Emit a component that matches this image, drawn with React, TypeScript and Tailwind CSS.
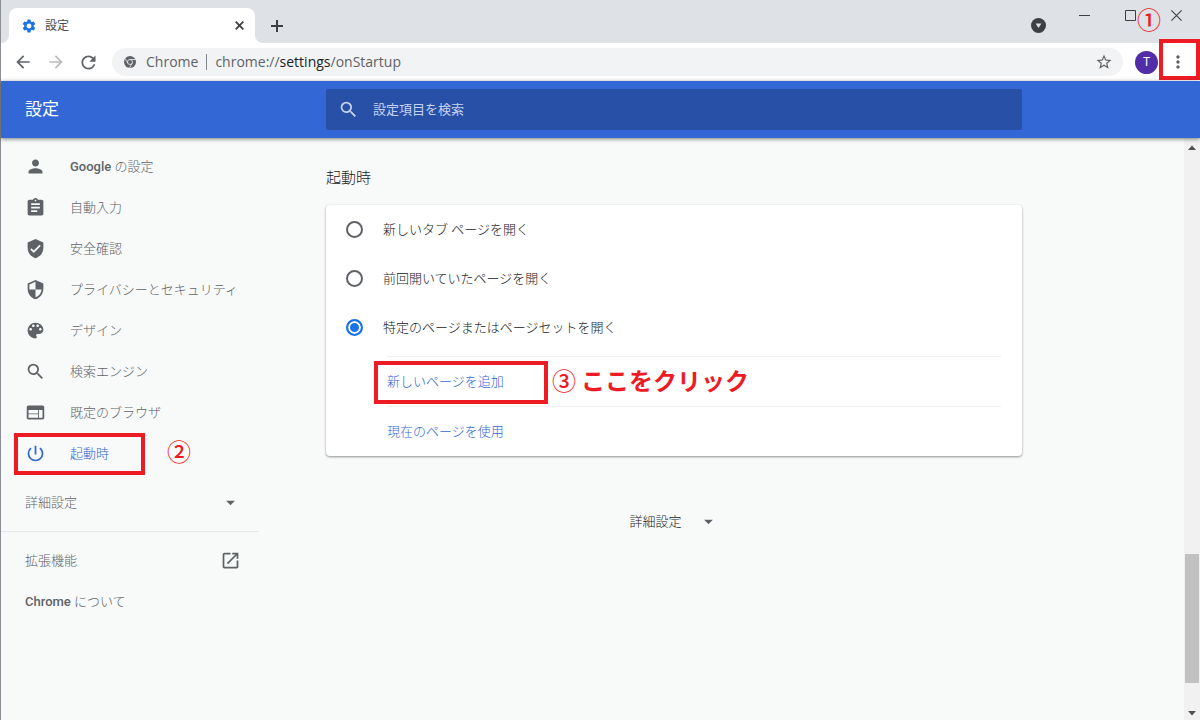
import { useState } from 'react';
import type { ReactNode } from 'react';
import {
  MdArrowBack,
  MdArrowDropDown,
  MdArrowForward,
  MdAssignment,
  MdMoreVert,
  MdOpenInNew,
  MdPerson,
  MdPowerSettingsNew,
  MdRefresh,
  MdSearch,
  MdSecurity,
  MdSettings,
  MdStarBorder,
  MdVerifiedUser,
  MdWeb,
} from 'react-icons/md';

interface NavEntry {
  id: string;
  label: ReactNode;
  icon: (props: { className?: string }) => ReactNode;
}

function PaletteIcon({ className }: { className?: string }) {
  return (
    <svg className={className} viewBox="0 0 24 24" fill="currentColor">
      <path d="M12 3c-4.97 0-9 4.03-9 9s4.03 9 9 9c.83 0 1.5-.67 1.5-1.5 0-.39-.15-.74-.39-1.01-.23-.26-.38-.61-.38-.99 0-.83.67-1.5 1.5-1.5H16c2.76 0 5-2.24 5-5 0-4.42-4.03-8-9-8zm-5.5 9c-.83 0-1.5-.67-1.5-1.5S5.67 9 6.5 9 8 9.67 8 10.5 7.33 12 6.5 12zm3-4C8.67 8 8 7.33 8 6.5S8.67 5 9.5 5s1.5.67 1.5 1.5S10.33 8 9.5 8zm5 0c-.83 0-1.5-.67-1.5-1.5S13.67 5 14.5 5s1.5.67 1.5 1.5S15.33 8 14.5 8zm3 4c-.83 0-1.5-.67-1.5-1.5S16.67 9 17.5 9s1.5.67 1.5 1.5-.67 1.5-1.5 1.5z" />
    </svg>
  );
}

const NAV_ENTRIES: NavEntry[] = [
  {
    id: 'people',
    label: (
      <>
        <span className="font-medium">Google</span> の設定
      </>
    ),
    icon: MdPerson,
  },
  { id: 'autofill', label: '自動入力', icon: MdAssignment },
  { id: 'safetyCheck', label: '安全確認', icon: MdVerifiedUser },
  { id: 'privacy', label: 'プライバシーとセキュリティ', icon: MdSecurity },
  { id: 'appearance', label: 'デザイン', icon: PaletteIcon },
  { id: 'search', label: '検索エンジン', icon: MdSearch },
  { id: 'defaultBrowser', label: '既定のブラウザ', icon: MdWeb },
  { id: 'onStartup', label: '起動時', icon: MdPowerSettingsNew },
];

const STARTUP_OPTIONS = [
  { id: 'newTab', label: '新しいタブ ページを開く' },
  { id: 'continue', label: '前回開いていたページを開く' },
  { id: 'specific', label: '特定のページまたはページセットを開く' },
];

function TabStrip() {
  return (
    <div className="flex h-[43px] items-end bg-[#dee1e6] pr-px pl-2 text-[#3c4043]">
      <div className="relative flex h-[35px] w-[246px] items-center rounded-t-lg bg-white pr-2 pl-3">
        <svg className="absolute bottom-0 -left-2 size-2 fill-white" viewBox="0 0 8 8">
          <path d="M8 0v8H0a8 8 0 0 0 8-8z" />
        </svg>
        <svg className="absolute -right-2 bottom-0 size-2 fill-white" viewBox="0 0 8 8">
          <path d="M0 0v8h8a8 8 0 0 1-8-8z" />
        </svg>
        <MdSettings className="size-4 text-[#1a73e8]" />
        <span className="ml-2 flex-1 text-xs text-[#45494d]">設定</span>
        <button type="button" aria-label="タブを閉じる" className="flex size-4 items-center justify-center">
          <svg className="size-[9px] stroke-current" viewBox="0 0 9 9" strokeWidth="1.8">
            <path d="M.7.7l7.6 7.6M8.3.7L.7 8.3" />
          </svg>
        </button>
      </div>
      <button type="button" aria-label="新しいタブ" className="ml-2 flex h-[35px] w-7 items-center justify-center">
        <svg className="size-3 stroke-current" viewBox="0 0 12 12" strokeWidth="2">
          <path d="M6 0v12M0 6h12" />
        </svg>
      </button>
      <button type="button" aria-label="タブを検索" className="ml-auto flex h-[35px] w-[46px] items-center justify-center">
        <svg className="size-[15px]" viewBox="0 0 15 15">
          <circle cx="7.5" cy="7.5" r="7.5" fill="#3c4043" />
          <path d="M4.6 5.5h5.8L7.5 10z" fill="#dee1e6" />
        </svg>
      </button>
      <div className="flex self-start">
        <button type="button" aria-label="最小化" className="flex h-[31px] w-[46px] items-center justify-center">
          <svg className="size-[11px] stroke-current" viewBox="0 0 11 11">
            <path d="M0 5.5h11" />
          </svg>
        </button>
        <button type="button" aria-label="最大化" className="flex h-[31px] w-[46px] items-center justify-center">
          <svg className="size-[11px] fill-none stroke-current" viewBox="0 0 11 11">
            <path d="M.5.5h10v10H.5z" />
          </svg>
        </button>
        <button type="button" aria-label="閉じる" className="flex h-[31px] w-[46px] items-center justify-center">
          <svg className="size-[11px] stroke-current" viewBox="0 0 11 11" strokeWidth="1.1">
            <path d="M.4.4l10.2 10.2M10.6.4L.4 10.6" />
          </svg>
        </button>
      </div>
    </div>
  );
}

function Toolbar() {
  return (
    <div className="flex h-[38px] items-center bg-white pl-[5px] text-[#5f6368]">
      <button type="button" aria-label="戻る" className="flex w-[33px] justify-center">
        <MdArrowBack className="size-5" />
      </button>
      <button type="button" aria-label="進む" className="flex w-[33px] justify-center text-[#babcbe]">
        <MdArrowForward className="size-5" />
      </button>
      <button type="button" aria-label="再読み込み" className="flex w-[33px] justify-center">
        <MdRefresh className="size-[21px]" />
      </button>
      <div className="ml-[7px] flex h-7 flex-1 items-center rounded-full bg-[#f1f3f4] pr-[10px] pl-3 font-['Open_Sans','Noto_Sans_CJK_JP',sans-serif] text-sm">
        <svg className="size-3 shrink-0" viewBox="0 0 24 24">
          <circle cx="12" cy="12" r="12" fill="#5f6368" />
          <circle cx="12" cy="12" r="5" fill="none" stroke="#f1f3f4" strokeWidth="1.6" />
          <path d="M12 7h11M7.7 14.5L2.4 5.2M16.3 14.5L11 23.8" stroke="#f1f3f4" strokeWidth="1.6" />
        </svg>
        <span className="ml-[10px]">Chrome</span>
        <span className="mx-2 h-4 w-px bg-[#80868b]" />
        <span className="flex-1">
          chrome://<span className="text-[#202124]">settings</span>/onStartup
        </span>
        <button type="button" aria-label="ブックマーク">
          <MdStarBorder className="size-[18px]" />
        </button>
      </div>
      <button
        type="button"
        aria-label="プロフィール"
        className="ml-3 size-[23px] rounded-full bg-[#512da8] text-xs text-white"
      >
        T
      </button>
      <div className="relative ml-[2px] flex h-full w-10 items-center">
        <button type="button" aria-label="メニュー" className="flex w-9 justify-center">
          <MdMoreVert className="size-5" />
        </button>
        <span className="pointer-events-none absolute -top-1 right-0 bottom-px -left-px border-4 border-[#ed1c24]" />
        <StepNumber className="absolute -top-9 -left-[23px]">①</StepNumber>
      </div>
    </div>
  );
}

function StepNumber({ children, className = '' }: { children: string; className?: string }) {
  return (
    <span className={`pointer-events-none text-2xl leading-7 font-medium text-[#ed1c24] ${className}`}>
      {children}
    </span>
  );
}

function SettingsHeader() {
  return (
    <header className="relative z-10 grid h-[57px] grid-cols-[325px_minmax(0,696px)_1fr] items-center bg-[#3367d6] shadow-[0_1px_4px_rgba(0,0,0,0.5)]">
      <h1 className="pl-6 text-[17px] text-white">設定</h1>
      <label className="flex h-[41px] items-center rounded-xs bg-[#2850a7] pl-3 text-[#c6d3f0]">
        <MdSearch className="size-[21px]" />
        <input
          type="search"
          aria-label="設定項目を検索"
          placeholder="設定項目を検索"
          className="ml-[14px] flex-1 bg-transparent text-[13px] outline-none placeholder:text-[#c6d3f0]"
        />
      </label>
    </header>
  );
}

function Sidebar() {
  return (
    <nav className="w-[257px] pt-2 text-[13px] font-light text-[#5f6368]">
      <ul>
        {NAV_ENTRIES.map(({ id, label, icon: Icon }) => (
          <li key={id} className="relative">
            <a
              href={`#${id}`}
              className={`flex h-[41px] items-center pl-6 ${id === 'onStartup' ? 'text-[#3367d6]' : ''}`}
            >
              <Icon className="mr-6 size-[21px]" />
              <span>{label}</span>
            </a>
            {id === 'onStartup' && (
              <>
                <span className="pointer-events-none absolute top-0 left-[13px] h-[42px] w-[131px] border-4 border-[#ed1c24]" />
                <StepNumber className="absolute top-[6px] left-[166px]">②</StepNumber>
              </>
            )}
          </li>
        ))}
      </ul>
      <button type="button" className="my-2 flex h-[41px] w-full items-center justify-between pr-[17px] pl-6">
        詳細設定
        <MdArrowDropDown className="size-[21px]" />
      </button>
      <div className="border-t border-[#e4e6ea] pt-2">
        <a href="#extensions" className="flex h-[41px] items-center justify-between pr-[17px] pl-6">
          拡張機能
          <MdOpenInNew className="size-[21px]" />
        </a>
        <a href="#about" className="flex h-[41px] items-center pl-6">
          <span>
            <span className="font-medium">Chrome</span> について
          </span>
        </a>
      </div>
    </nav>
  );
}

function StartupSection() {
  const [selected, setSelected] = useState('specific');

  return (
    <main className="text-[13px] font-light text-[#202124]">
      <h2 className="pt-7 text-[15px] leading-6">起動時</h2>
      <div className="mt-[15px] rounded-sm bg-white pr-[21px] pl-5 shadow-[0_1px_2px_rgba(60,64,67,0.4),0_1px_3px_rgba(60,64,67,0.2)]">
        {STARTUP_OPTIONS.map(({ id, label }) => (
          <label key={id} className="flex h-[49px] items-center gap-5">
            <input
              type="radio"
              name="startup"
              checked={selected === id}
              onChange={() => setSelected(id)}
              className="size-[17px] appearance-none rounded-full border-2 border-[#5f6368] checked:border-[#1a73e8] checked:bg-[#1a73e8] checked:shadow-[inset_0_0_0_2px_white]"
            />
            {label}
          </label>
        ))}
        <div className="mt-1 ml-[41px] text-[#3367d6]">
          <div className="relative flex h-[50px] items-center border-t border-[#f0f0f0]">
            <button type="button">新しいページを追加</button>
            <span className="pointer-events-none absolute top-1 -left-[13px] h-[43px] w-[174px] border-4 border-[#ed1c24]" />
            <div className="pointer-events-none absolute left-[165px] flex items-center gap-[5px] text-[#ed1c24]">
              <StepNumber>③</StepNumber>
              <span className="text-2xl leading-7 font-bold whitespace-nowrap">ここをクリック</span>
            </div>
          </div>
          <div className="flex h-[50px] items-center border-t border-[#f0f0f0]">
            <button type="button">現在のページを使用</button>
          </div>
        </div>
      </div>
      <div className="mt-[45px] flex justify-center">
        <button type="button" className="flex h-[41px] items-center gap-4">
          詳細設定
          <MdArrowDropDown className="size-[21px] text-[#5f6368]" />
        </button>
      </div>
    </main>
  );
}

function ScrollBar() {
  return (
    <div className="flex w-4 flex-col items-center bg-[#f1f1f1] text-[#505050]">
      <svg className="mt-[7px] h-[5px] w-2 fill-current" viewBox="0 0 8 5">
        <path d="M0 5l4-4.5L8 5z" />
      </svg>
      <span className="mt-auto mb-7 h-[129px] w-[14px] bg-[#c1c1c1]" />
      <svg className="mb-1 h-[5px] w-2 fill-current" viewBox="0 0 8 5">
        <path d="M0 0l4 4.5L8 0z" />
      </svg>
    </div>
  );
}

export default function App() {
  return (
    <div
      lang="ja"
      className="flex min-h-screen flex-col border-l border-[#8a8d91] bg-[#f8faf9] font-[Roboto,'Noto_Sans_CJK_JP',sans-serif]"
    >
      <TabStrip />
      <Toolbar />
      <SettingsHeader />
      <div className="flex flex-1">
        <div className="grid flex-1 grid-cols-[325px_minmax(0,696px)_1fr]">
          <Sidebar />
          <StartupSection />
        </div>
        <ScrollBar />
      </div>
    </div>
  );
}
